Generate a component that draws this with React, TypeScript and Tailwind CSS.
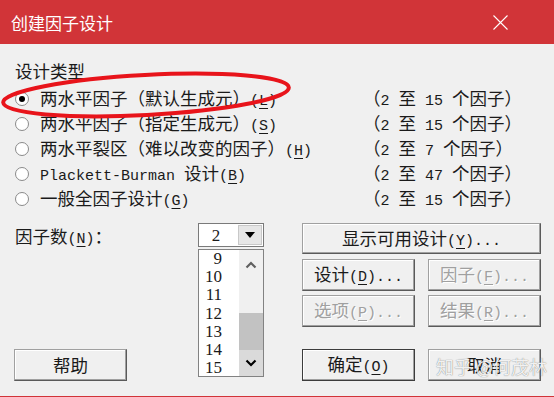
import React from "react";

const cjk = "font-['Noto_Sans_CJK_SC',sans-serif] text-[17.5px]";
const mono = "font-['Liberation_Mono',monospace] text-[15px] whitespace-pre";

const Mix = ({ s }: { s: string }) => {
  const parts = s.split(/([\x20-\x7e]+)/).filter(Boolean);
  return (
    <>
      {parts.map((p, i) =>
        /^[\x20-\x7e]+$/.test(p) ? (
          <span key={i} className={mono}>
            {p}
          </span>
        ) : (
          <span key={i} className={cjk}>
            {p}
          </span>
        )
      )}
    </>
  );
};

// "&X" underlines X (the accelerator key)
const Lbl = ({ s }: { s: string }) => {
  const i = s.indexOf("&");
  const body =
    i < 0 ? (
      <Mix s={s} />
    ) : (
      <>
        <Mix s={s.slice(0, i)} />
        <span className="underline underline-offset-[3px] decoration-1">
          <Mix s={s[i + 1]} />
        </span>
        <Mix s={s.slice(i + 2)} />
      </>
    );
  return <span className="leading-none whitespace-nowrap">{body}</span>;
};

const designs = [
  { label: "两水平因子（默认生成元）(&L)", range: "（2 至 15 个因子）", on: true },
  { label: "两水平因子（指定生成元）(&S)", range: "（2 至 15 个因子）" },
  { label: "两水平裂区（难以改变的因子）(&H)", range: "（2 至 7 个因子）" },
  { label: "Plackett-Burman 设计(&B)", range: "（2 至 47 个因子）" },
  { label: "一般全因子设计(&G)", range: "（2 至 15 个因子）" },
];

const Btn = ({
  s,
  disabled,
  main,
  className = "",
}: {
  s: string;
  disabled?: boolean;
  main?: boolean;
  className?: string;
}) => (
  <div
    className={`flex items-center justify-center leading-none bg-[#f0f0f0] border ${
      main ? "border-[#3c3c3c]" : "border-[#a0a0a0] border-r-[#5a5a5a] border-b-[#5a5a5a]"
    } shadow-[inset_-1px_-1px_0_#a0a0a0,inset_1px_1px_0_#ffffff] ${
      disabled ? "text-[#a0a0a0] [text-shadow:1px_1px_0_#ffffff]" : "text-[#1a1a1a]"
    } ${className}`}
  >
    <Lbl s={s} />
  </div>
);

const Radio = ({ on }: { on?: boolean }) => (
  <div className="w-[14px] h-[14px] rounded-full border border-[#8a8a8a] bg-white flex items-center justify-center shrink-0">
    {on && <div className="w-[6px] h-[6px] rounded-full bg-black" />}
  </div>
);

const Chevron = ({ up, color }: { up?: boolean; color: string }) => (
  <svg width="12" height="8" viewBox="0 0 12 8">
    <path
      d={up ? "M1.5 6.5 L6 2 L10.5 6.5" : "M1.5 1.5 L6 6 L10.5 1.5"}
      fill="none"
      stroke={color}
      strokeWidth="2.2"
    />
  </svg>
);

export default function App() {
  return (
    <div className="relative w-[554px] h-[397px] overflow-hidden bg-[#f0f0f0] select-none">
      {/* title bar */}
      <div className="h-[44px] bg-[#d13438] flex items-center justify-between pl-[11px] pr-[46px]">
        <span className="font-['Noto_Sans_CJK_SC',sans-serif] text-[17px] text-white leading-none">
          创建因子设计
        </span>
        <svg width="15" height="15" viewBox="0 0 15 15">
          <path d="M0.5 0.5 L14.5 14.5 M14.5 0.5 L0.5 14.5" stroke="#fff" strokeWidth="1.1" />
        </svg>
      </div>

      <div className="h-[353px] border-b border-[#d13438] pl-[14px] pt-[14px] text-[#1a1a1a]">
        <div className="h-[25px] mb-[3px] pl-[1px] flex items-center">
          <Lbl s="设计类型" />
        </div>

        {designs.map((d) => (
          <div key={d.label} className="h-[25px] flex items-center">
            <div className="w-[349px] flex items-center">
              <div className="ml-[1px]">
                <Radio on={d.on} />
              </div>
              <div className="ml-[11px]">
                <Lbl s={d.label} />
              </div>
            </div>
            <div>
              <Lbl s={d.range} />
            </div>
          </div>
        ))}

        <div className="mt-[12px] flex h-[158px]">
          <div className="w-[184px] flex flex-col">
            <div className="h-[24px] pt-[3px] pl-[1px] flex items-center">
              <Lbl s="因子数(&N)：" />
            </div>
            <Btn s="帮助" className="mt-auto w-[113px] h-[32px]" />
          </div>

          <div className="w-[66px] flex flex-col">
            <div className="h-[24px] border border-[#7a7a7a] bg-white flex">
              <div className="flex-1 flex items-center justify-center pr-[4px] font-['Liberation_Serif',serif] text-[17px] leading-none">
                2
              </div>
              <div className="w-[24px] m-[1px] bg-[#e6e6e6] border border-[#c8c8c8] flex items-center justify-center">
                <svg width="10" height="6" viewBox="0 0 10 6">
                  <path d="M0 0 H10 L5 6 Z" fill="#000" />
                </svg>
              </div>
            </div>
            <div className="mt-[2px] h-[128px] border border-[#828282] bg-white flex overflow-hidden">
              <div className="w-[41px] pl-[3px]">
                {[9, 10, 11, 12, 13, 14, 15].map((n) => (
                  <div
                    key={n}
                    className="h-[18.2px] w-[20px] text-right font-['Liberation_Serif',serif] text-[17px] leading-[18px]"
                  >
                    {n}
                  </div>
                ))}
              </div>
              <div className="w-[24px] flex flex-col bg-[#f0f0f0]">
                <div className="h-[26px] flex items-center justify-center pt-[4px]">
                  <Chevron up color="#606060" />
                </div>
                <div className="h-[37px]" />
                <div className="h-[37px] bg-[#c2c2c2]" />
                <div className="flex-1 bg-[#dadada] flex items-center justify-center">
                  <Chevron color="#000" />
                </div>
              </div>
            </div>
          </div>

          <div className="ml-[38px] w-[239px] flex flex-col">
            <Btn s="显示可用设计(&Y)..." className="h-[31px]" />
            <div className="mt-[5px] flex justify-between">
              <Btn s="设计(&D)..." className="w-[113px] h-[32px]" />
              <Btn s="因子(&F)..." disabled className="w-[113px] h-[32px]" />
            </div>
            <div className="mt-[4px] flex justify-between">
              <Btn s="选项(&P)..." disabled className="w-[113px] h-[32px]" />
              <Btn s="结果(&R)..." disabled className="w-[113px] h-[32px]" />
            </div>
            <div className="mt-[22px] flex justify-between">
              <Btn s="确定(&O)" main className="w-[113px] h-[32px]" />
              <Btn s="取消" className="w-[113px] h-[32px]" />
            </div>
          </div>
        </div>
      </div>

      {/* annotation ellipse drawn over the dialog */}
      <svg className="absolute left-0 top-0 pointer-events-none" width="554" height="397">
        <ellipse
          cx="146"
          cy="95"
          rx="143"
          ry="20"
          fill="none"
          stroke="#e8141b"
          strokeWidth="4"
          transform="rotate(-3 146 95)"
        />
      </svg>

      {/* watermark */}
      <div className="absolute left-[436px] top-[357px] font-['Noto_Sans_CJK_SC',sans-serif] text-[18px] leading-none text-white/90 [text-shadow:0_0_1px_rgba(0,0,0,0.6)] pointer-events-none whitespace-nowrap">
        知乎 @何茂林
      </div>
    </div>
  );
}
